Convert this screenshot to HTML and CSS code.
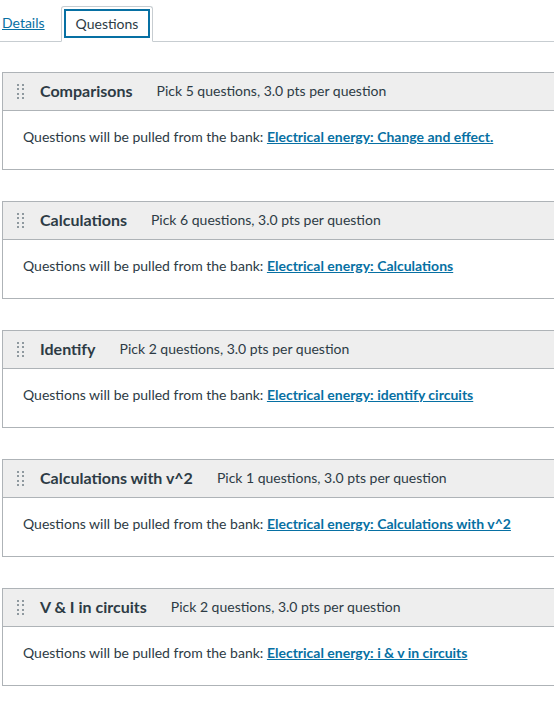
FILE: index.html
```html
<!DOCTYPE html>
<html>
<head>
<meta charset="utf-8">
<link rel="stylesheet" href="styles.css">
</head>
<body>
<div class="page">
  <div class="tabs">
    <a class="tab-link" href="#">Details</a>
    <div class="tab-active"><span class="focus">Questions</span></div>
  </div>
  <div class="groups">
    <div class="card">
      <div class="card-head">
        <span class="handle"><i></i><i></i><i></i><i></i><i></i><i></i><i></i><i></i></span>
        <span class="title">Comparisons</span>
        <span class="meta">Pick 5 questions, 3.0 pts per question</span>
      </div>
      <div class="card-body">Questions will be pulled from the bank: <a href="#">Electrical energy: Change and effect.</a></div>
    </div>
    <div class="card">
      <div class="card-head">
        <span class="handle"><i></i><i></i><i></i><i></i><i></i><i></i><i></i><i></i></span>
        <span class="title">Calculations</span>
        <span class="meta">Pick 6 questions, 3.0 pts per question</span>
      </div>
      <div class="card-body">Questions will be pulled from the bank: <a href="#">Electrical energy: Calculations</a></div>
    </div>
    <div class="card">
      <div class="card-head">
        <span class="handle"><i></i><i></i><i></i><i></i><i></i><i></i><i></i><i></i></span>
        <span class="title">Identify</span>
        <span class="meta">Pick 2 questions, 3.0 pts per question</span>
      </div>
      <div class="card-body">Questions will be pulled from the bank: <a href="#">Electrical energy: identify circuits</a></div>
    </div>
    <div class="card">
      <div class="card-head">
        <span class="handle"><i></i><i></i><i></i><i></i><i></i><i></i><i></i><i></i></span>
        <span class="title">Calculations with v^2</span>
        <span class="meta">Pick 1 questions, 3.0 pts per question</span>
      </div>
      <div class="card-body">Questions will be pulled from the bank: <a href="#">Electrical energy: Calculations with v^2</a></div>
    </div>
    <div class="card">
      <div class="card-head">
        <span class="handle"><i></i><i></i><i></i><i></i><i></i><i></i><i></i><i></i></span>
        <span class="title">V &amp; I in circuits</span>
        <span class="meta">Pick 2 questions, 3.0 pts per question</span>
      </div>
      <div class="card-body">Questions will be pulled from the bank: <a href="#">Electrical energy: i &amp; v in circuits</a></div>
    </div>
  </div>
</div>
</body>
</html>
```
FILE: styles.css
```css
html, body {
  margin: 0;
  padding: 0;
  background: #fff;
}
body {
  font-family: Lato, "Open Sans", sans-serif;
  color: #2d3b45;
  width: 554px;
  height: 705px;
  overflow: hidden;
}
.page {
  width: 554px;
  overflow: hidden;
}
.tabs {
  display: flex;
  align-items: flex-end;
  height: 41px;
  border-bottom: 1px solid #c7cdd1;
}
.tab-link {
  font-size: 14px;
  color: #0770a3;
  text-decoration: underline;
  margin-left: 2px;
  padding-bottom: 10px;
  width: 59px;
}
.tab-active {
  height: 36px;
  width: 92px;
  box-sizing: border-box;
  border: 1px solid #c7cdd1;
  border-bottom: 1px solid #fff;
  border-radius: 3px 3px 0 0;
  margin-bottom: -1px;
  background: #fff;
  padding: 2px;
  display: flex;
}
.focus {
  flex: 1;
  border: 2px solid #0770a3;
  display: flex;
  align-items: center;
  justify-content: center;
  font-size: 14px;
  color: #2d3b45;
  height: 29px;
  box-sizing: border-box;
}
.groups {
  padding-top: 30px;
  padding-left: 2px;
  display: flex;
  flex-direction: column;
  gap: 31px;
}
.card {
  width: 570px;
  border: 1px solid #aeb3b7;
  box-sizing: border-box;
}
.card-head {
  background: #eeeeee;
  border-bottom: 1px solid #aeb3b7;
  display: flex;
  align-items: center;
  padding-left: 14px;
  padding-bottom: 2px;
  box-sizing: border-box;
  height: 38px;
}
.handle {
  display: grid;
  grid-template-columns: 2px 2px;
  column-gap: 3px;
  row-gap: 2.5px;
  width: 7px;
  margin-right: 16px;
  margin-top: 2px;
}
.handle i {
  display: block;
  width: 2px;
  height: 2px;
  background: #8f999f;
}
.title {
  font-size: 16px;
  font-weight: bold;
  color: #2d3b45;
  margin-right: 24px;
}
.meta {
  font-size: 14px;
  color: #2d3b45;
}
.card-body {
  height: 58px;
  display: flex;
  align-items: center;
  padding-left: 20px;
  padding-bottom: 8px;
  box-sizing: border-box;
  font-size: 14px;
  color: #2d3b45;
  white-space: pre;
}
.card-body a {
  color: #0770a3;
  font-weight: bold;
  text-decoration: underline;
}
```
